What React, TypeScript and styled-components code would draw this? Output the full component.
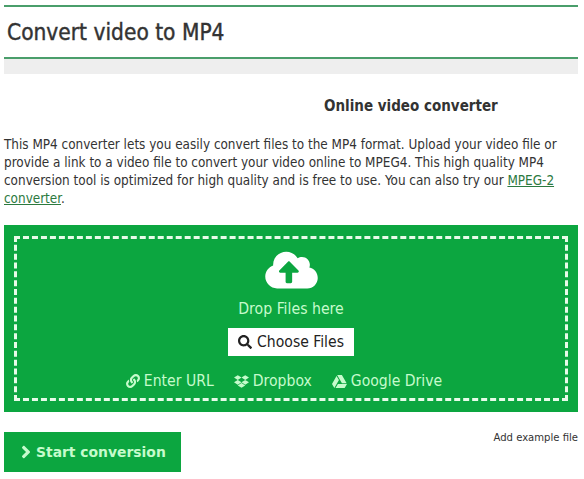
import React from "react"
import styled, {createGlobalStyle} from "styled-components"
import {FaAngleRight, FaCloudUploadAlt, FaDropbox, FaGoogleDrive, FaLink, FaSearch} from "react-icons/fa"

const GlobalStyle = createGlobalStyle`
  body {
    margin: 0;
    background: #fff;
    font-family: "DejaVu Sans Condensed", "DejaVu Sans", sans-serif;
    color: #333;
  }
`

const Root = styled.div`
  width: 574px;
  padding: 5px 6px 7px 4px;
`

const Header = styled.div`
  height: 50px;
  border-top: 2px solid #4a9e6b;
  border-bottom: 2px solid #4a9e6b;
  display: flex;
  align-items: center;
  padding-left: 3px;
`

const Title = styled.h1`
  margin: 0;
  font-size: 22.5px;
  line-height: 26px;
  font-weight: 400;
  -webkit-text-stroke: 0.4px #333;
  color: #333;
`

const GreyBar = styled.div`
  height: 15px;
  background: #eeeeee;
`

const Subtitle = styled.h2`
  margin: 22px 0 0 320px;
  font-size: 15px;
  line-height: 20px;
  font-weight: 700;
  color: #333;
`

const Intro = styled.p`
  margin: 20px 0 0;
  font-size: 13.4px;
  line-height: 18px;
  color: #333;
`

const IntroLink = styled.a`
  color: #2c7a3f;
  text-decoration: underline;
`

const DropZone = styled.div`
  margin-top: 17px;
  height: 187px;
  background: #0ca640;
  padding: 11px 10px;
  box-sizing: border-box;
`

const Dashed = styled.div`
  height: 165px;
  border: 3px dashed #e8fbe9;
  box-sizing: border-box;
  display: flex;
  flex-direction: column;
  align-items: center;
  color: #c6fbcc;
`

const CloudIcon = styled(FaCloudUploadAlt)`
  margin-top: 10px;
  width: 53px;
  height: 42px;
  color: #fff;
`

const DropText = styled.div`
  margin-top: 9px;
  font-size: 15.7px;
  line-height: 18px;
`

const ChooseButton = styled.button`
  margin-top: 10px;
  width: 126px;
  height: 28px;
  border: 0;
  background: #fff;
  color: #222;
  font-family: inherit;
  font-size: 15.6px;
  display: flex;
  align-items: center;
  justify-content: center;
  gap: 5px;
  padding: 0;
`

const Sources = styled.div`
  margin: 16px 14px 0 0;
  display: flex;
  gap: 20px;
  font-size: 15.6px;
  line-height: 18px;
`

const Source = styled.span`
  display: flex;
  align-items: center;
  gap: 4px;
`

const Footer = styled.div`
  margin-top: 20px;
  display: flex;
  justify-content: space-between;
  align-items: flex-start;
`

const StartButton = styled.button`
  width: 177px;
  height: 40px;
  border: 0;
  background: #0ca640;
  color: #c6fbcc;
  font-family: "DejaVu Sans", sans-serif;
  font-size: 13.9px;
  font-weight: 700;
  display: flex;
  align-items: center;
  justify-content: flex-start;
  padding: 0 0 0 12px;
`

const ExampleLink = styled.span`
  font-size: 11.2px;
  line-height: 12px;
  color: #333;
`

export default function App() {
    return (<Root>
        <GlobalStyle/>
        <Header><Title>Convert video to MP4</Title></Header>
        <GreyBar/>
        <Subtitle>Online video converter</Subtitle>
        <Intro>
            This MP4 converter lets you easily convert files to the MP4 format. Upload your video file or
            provide a link to a video file to convert your video online to MPEG4. This high quality MP4
            conversion tool is optimized for high quality and is free to use. You can also try our <IntroLink href="#">MPEG-2</IntroLink> <IntroLink href="#">converter</IntroLink>.
        </Intro>
        <DropZone>
            <Dashed>
                <CloudIcon/>
                <DropText>Drop Files here</DropText>
                <ChooseButton><FaSearch size={14}/>Choose Files</ChooseButton>
                <Sources>
                    <Source><FaLink size={14}/>Enter URL</Source>
                    <Source><FaDropbox size={15}/>Dropbox</Source>
                    <Source><FaGoogleDrive size={15}/>Google Drive</Source>
                </Sources>
            </Dashed>
        </DropZone>
        <Footer>
            <StartButton><FaAngleRight size={20}/>Start conversion</StartButton>
            <ExampleLink>Add example file</ExampleLink>
        </Footer>
    </Root>)
}
